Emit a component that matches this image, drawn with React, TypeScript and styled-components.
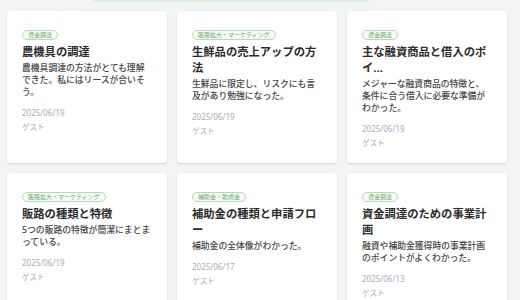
import { styled, createGlobalStyle } from 'styled-components'

const GlobalStyle = createGlobalStyle`
    html, body {
        margin: 0;
        padding: 0;
        background: #f2f5f3;
        font-family: "Noto Sans", "Noto Sans CJK JP", sans-serif;
    }
`

const Page = styled.div`
    width: 520px;
    height: 300px;
    overflow: hidden;
    padding: 0 0 0 7px;
    box-sizing: border-box;
`

const TopStrip = styled.div`
    width: 277px;
    height: 2px;
    margin-left: 86px;
    background: #dff0de;
    border-radius: 0 0 3px 3px;
`

const Grid = styled.div`
    display: grid;
    grid-template-columns: repeat(3, 160px);
    column-gap: 10px;
    row-gap: 10px;
    margin-top: 9px;
`

const Card = styled.div`
    background: #fff;
    border-radius: 3px;
    box-shadow: 0 1px 2px rgba(0, 0, 0, 0.12), 0 0 1px rgba(0, 0, 0, 0.05);
    padding: 19px 15px 13px;
    display: flex;
    flex-direction: column;
    align-items: flex-start;
`

const Tag = styled.span`
    display: inline-block;
    font-size: 6px;
    line-height: 8px;
    padding: 0 5px;
    color: #6aab6a;
    background: #f6fbf5;
    border: 1px solid #b5dbb2;
    border-radius: 6px;
    white-space: nowrap;
`

const Title = styled.div`
    margin-top: 4px;
    font-size: 11.3px;
    line-height: 16px;
    font-weight: 700;
    color: #2c2c2c;
    width: 130px;
`

const Body = styled.div`
    margin-top: 2px;
    font-size: 8.8px;
    line-height: 12px;
    font-weight: 500;
    color: #454545;
    width: 130px;
`

const DateText = styled.div`
    margin-top: 9px;
    font-size: 8px;
    line-height: 12px;
    color: #a3adba;
`

const Author = styled.div`
    margin-top: 2px;
    font-size: 7.5px;
    line-height: 13px;
    color: #a3adba;
`

const posts = [
    { tag: '資金調達', title: '農機具の調達', body: '農機具調達の方法がとても理解できた。私にはリースが合いそう。', date: '2025/06/19' },
    { tag: '販路拡大・マーケティング', title: '生鮮品の売上アップの方法', body: '生鮮品に限定し、リスクにも言及があり勉強になった。', date: '2025/06/19' },
    { tag: '資金調達', title: '主な融資商品と借入のポイ...', body: 'メジャーな融資商品の特徴と、条件に合う借入に必要な準備がわかった。', date: '2025/06/19' },
    { tag: '販路拡大・マーケティング', title: '販路の種類と特徴', body: '5つの販路の特徴が簡潔にまとまっている。', date: '2025/06/19' },
    { tag: '補助金・助成金', title: '補助金の種類と申請フロー', body: '補助金の全体像がわかった。', date: '2025/06/17' },
    { tag: '資金調達', title: '資金調達のための事業計画', body: '融資や補助金獲得時の事業計画のポイントがよくわかった。', date: '2025/06/13' },
]

const App = () => {
    return (
        <Page>
            <GlobalStyle />
            <TopStrip />
            <Grid>
                {posts.map((p, i) => (
                    <Card key={i}>
                        <Tag>{p.tag}</Tag>
                        <Title>{p.title}</Title>
                        <Body>{p.body}</Body>
                        <DateText>{p.date}</DateText>
                        <Author>ゲスト</Author>
                    </Card>
                ))}
            </Grid>
        </Page>
    )
}

export default App
